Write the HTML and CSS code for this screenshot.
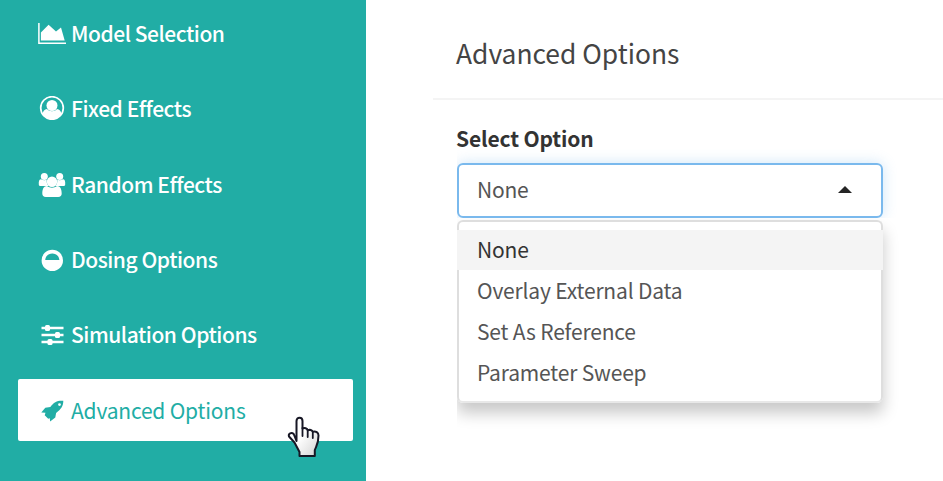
FILE: index.html
```html
<!DOCTYPE html>
<html lang="en">
<head>
<meta charset="utf-8">
<title>Advanced Options</title>
<link rel="stylesheet" href="styles.css">
</head>
<body>
<div class="app">
<nav class="sidebar">
<a class="item model"><svg class="icon" viewBox="0 0 28 24"><path d="M.9 1v20.300H28" fill="none" stroke="currentColor" stroke-width="1.500"/><path d="M2.900 18.600V10.500L10.600 2.800l7.400 6.600 5-4 3.700 13.200z"/></svg><span>Model Selection</span></a>
<a class="item fixed"><svg class="icon" viewBox="0 0 28 24"><circle cx="14" cy="12" r="11.300" fill="none" stroke="currentColor" stroke-width="1.700"/><circle cx="14" cy="9.500" r="5.500"/><path d="M4.500 18c.5-3 2-4.500 4.500-5 2.500 3 7.500 3 10 0 2.500.5 4 2 4.500 5-4.500 7-14.500 7-19 0z"/></svg><span>Fixed Effects</span></a>
<a class="item random"><svg class="icon" viewBox="0 0 28 24"><circle cx="6.300" cy="3.500" r="3.500"/><circle cx="21.700" cy="3.500" r="3.500"/><path d="M.8 11.500C.5 8 1.400 6.200 3 6.200c2.300 1.200 4 1.200 5.700.5-.3 3 .6 4.600 2 6.300H3C1.600 13 .8 12.500.8 11.500zM27.200 11.500c.3-3.500-.6-5.300-2.200-5.300-2.300 1.200-4 1.200-5.700.5.3 3-.6 4.600-2 6.300H25c1.400 0 2.200-.5 2.200-1.500z"/><circle cx="14" cy="8.800" r="5.200"/><path d="M4.300 20.500c0-4.500 1.400-7.500 4.700-7.500 3 2.300 7 2.300 10 0 3.300 0 4.700 3 4.700 7.500 0 2.300-1.200 3.500-3.500 3.500H7.800c-2.300 0-3.500-1.200-3.500-3.500z"/></svg><span>Random Effects</span></a>
<a class="item dosing"><svg class="icon" viewBox="0 0 28 24"><path fill-rule="evenodd" d="M14.300 1.700a10.700 10.700 0 1 0 0 21.400 10.700 10.700 0 0 0 0-21.400zM7.200 12c.3-4.200 3.200-6.500 7.100-6.500s6.800 2.300 7.100 6.500z"/></svg><span>Dosing Options</span></a>
<a class="item simulation"><svg class="icon" viewBox="0 0 28 24"><g fill="none" stroke="currentColor" stroke-width="2.700"><path d="M3.500 5h22M3.500 12h22M3.500 19h22"/></g><rect x="7" y="2" width="5" height="6" rx="1.500"/><rect x="17" y="9" width="5" height="6" rx="1.500"/><rect x="9.500" y="16" width="5" height="6" rx="1.500"/></svg><span>Simulation Options</span></a>
<a class="item active"><svg class="icon" viewBox="0 0 28 24"><path fill-rule="evenodd" d="M25.300 2.800c-5.800-.5-9.300 1.300-13 6.200l-5 .7L3.300 14.500l4.200.3-.8 2.500 3.500 3.400 1.600-.5.300 3.300 5.200-4 .8-4.500c5-3.800 7.200-6.700 7.200-12.200zM21.500 5.200a1.400 1.400 0 1 1 0 2.800 1.400 1.400 0 0 1 0-2.800z"/></svg><span>Advanced Options</span>
<svg class="pointer" viewBox="0 0 34 43"><defs><linearGradient id="hand" x1="0" y1="0" x2="1" y2="1"><stop offset=".45" stop-color="#fff"/><stop offset="1" stop-color="#d2d2d2"/></linearGradient></defs><path d="M9.500 25V5c0-4.300 6-4.300 6 0v7.500c2-1 4.700-.3 5.200 1.800 2-.9 4.500-.3 5 1.500 3.200-.8 5.800.7 5.800 3.700 0 8-1.700 9.500-3.700 14.500V40H12.500v-4L7.500 26.500 2 20.500c-1-3 2.500-4.500 4.700-2.500z" fill="url(#hand)" stroke="#171725" stroke-width="2" stroke-linejoin="round"/><path d="M15.500 12v8M20.700 14v7M25.800 16v6" fill="none" stroke="#171725" stroke-width="1.800" stroke-linecap="round"/></svg></a>
</nav>
<main class="content">
<h1 class="title">Advanced Options</h1>
<section class="panel">
<label class="label">Select Option</label>
<div class="select"><span>None</span><svg class="caret" viewBox="0 0 16 8"><path d="M0 8 8 0l8 8z"/></svg></div>
<div class="clip"><ul class="options"><li class="selected">None</li><li>Overlay External Data</li><li>Set As Reference</li><li>Parameter Sweep</li></ul></div>
</section>
</main>
</div>
</body>
</html>
```
FILE: styles.css
```css
* { box-sizing: border-box; }
body {
  margin: 0;
  background: #fff;
  color: #555;
  font: 21px/30px "Source Sans Pro", "Noto Sans CJK SC", "Noto Sans", sans-serif;
  letter-spacing: -.2px;
}
.app { display: flex; width: 943px; height: 481px; overflow: hidden; }
.sidebar {
  width: 366px;
  flex: none;
  background: #21ada5;
  padding: 3px 13px 0 18px;
  display: flex;
  flex-direction: column;
  gap: 13.300px;
}
.item {
  position: relative;
  display: flex;
  align-items: center;
  flex: none;
  height: 62px;
  padding-left: 20px;
  gap: 5px;
  color: #fff;
  font-weight: 500;
  letter-spacing: -.45px;
  border-radius: 2px;
  white-space: nowrap;
}
.item span { padding-bottom: 2px; }
.icon { width: 28px; height: 24px; fill: currentColor; flex: none; }
.fixed .icon { margin-bottom: 2px; }
.active { background: #fff; color: #21ada5; font-weight: 400; letter-spacing: -.2px; }
.active span { padding-bottom: 0; }
.pointer { position: absolute; left: 269px; top: 37px; width: 34px; height: 43px; }
.content { flex: 1; padding-left: 67px; min-width: 0; }
.title {
  margin: 0;
  height: 100px;
  padding: 36px 0 0 23px;
  border-bottom: 2px solid #f4f4f4;
  font-size: 26.400px;
  letter-spacing: 0;
  line-height: 34px;
  font-weight: 400;
  color: #444;
}
.panel { width: 450px; padding: 23px 0 0 24px; }
.label { display: block; height: 40px; margin-left: -1px; font-weight: 700; letter-spacing: -.15px; color: #333; }
.select {
  height: 55px;
  border: 2px solid #7ab9ed;
  border-radius: 6px;
  box-shadow: 0 0 14px rgba(102, 175, 233, .32);
  clip-path: inset(-20px -20px 0 0);
  display: flex;
  align-items: center;
  justify-content: space-between;
  padding: 0 28px 4px 18px;
}
.caret { width: 16px; height: 7px; margin-top: 2px; fill: #252525; }
.clip { clip-path: inset(0 -30px -40px 0); padding-top: 2px; }
.options {
  margin: 0;
  padding: 8px 0;
  height: 183px;
  list-style: none;
  border: 2px solid #dedede;
  border-bottom-color: #e8e8e8;
  border-radius: 6px;
  box-shadow: 0 10px 16px rgba(0, 0, 0, .22);
}
.options li { height: 41px; padding: 5px 18px; white-space: nowrap; letter-spacing: -.17px; }
.options .selected { height: 40px; background: #f4f4f4; color: #333; margin: 0 -2px; padding: 4px 20px; }
```
